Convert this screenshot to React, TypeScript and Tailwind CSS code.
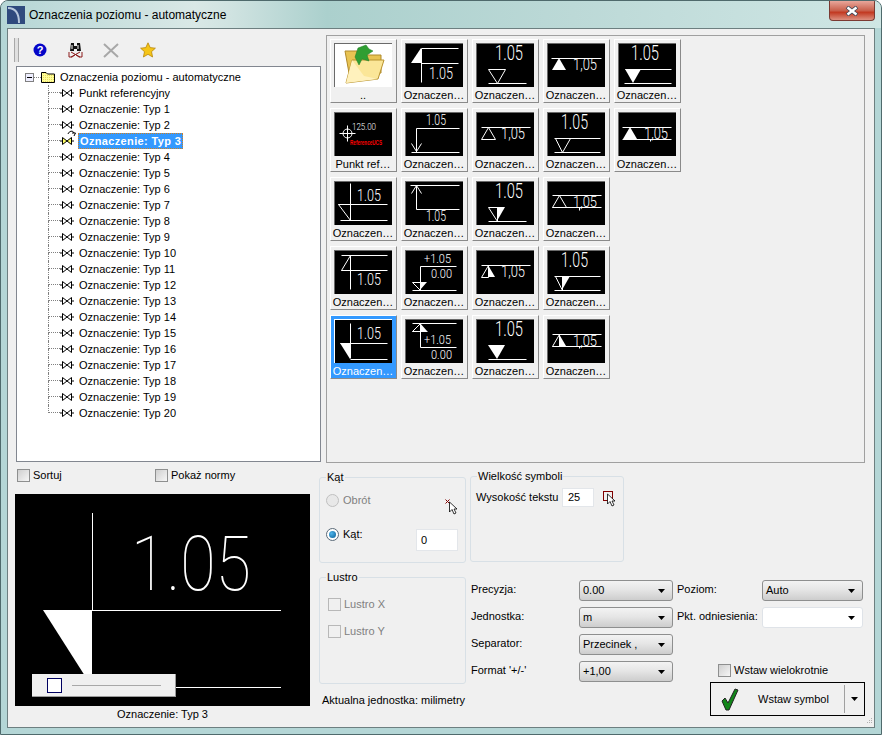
import type { ReactNode } from "react";

const font = "font-['Liberation_Sans',sans-serif]";

type Label = [string, number, number, number, number];
type Thumb = {
  lines?: string;
  fill?: string;
  outline?: string;
  labels?: Label[];
  red?: boolean;
  cross?: boolean;
};

const big1: Label = ["1.05", 19, 17, 20, 28];
const big2: Label = ["1.05", 14, 17, 20, 27];
const comma: Label = ["1,05", 26, 27, 17, 24];

const thumbs: { name: string; art: Thumb | null }[] = [
  { name: "..", art: null },
  { name: "Oznaczen…", art: { lines: "M16 5H53M16 20H53M16 5V39", fill: "6,20 16,5 16,20", labels: [["1.05", 24, 36, 17, 24]] } },
  { name: "Oznaczen…", art: { lines: "M12 40H50", outline: "12,26 29,26 21,40", labels: [big1] } },
  { name: "Oznaczen…", art: { lines: "M4 15H54", fill: "5,27 19,27 12,15", labels: [comma] } },
  { name: "Oznaczen…", art: { lines: "M7 26H53M6 40H53", fill: "7,26 23,26 15,40", labels: [["1.05", 13, 17, 20, 28]] } },
  { name: "Punkt ref…", art: { cross: true, labels: [["125.00", 18, 18, 9, 24]], red: true } },
  { name: "Oznaczen…", art: { lines: "M11 16H54M11 16V40M6 40H54M6 31L11 39L16 31", labels: [["1.05", 21, 13, 14, 20]] } },
  { name: "Oznaczen…", art: { lines: "M5 15H54", outline: "5,27 19,27 12,15", labels: [["1,05", 25, 27, 17, 24]] } },
  { name: "Oznaczen…", art: { lines: "M7 26H53M7 40H53", outline: "8,26 23,26 15,40", labels: [big2] } },
  { name: "Oznaczen…", art: { lines: "M4 15H53M4 27H53M32 27V29", fill: "5,27 19,27 12,15", labels: [comma] } },
  { name: "Oznaczen…", art: { lines: "M16 2V39M4 23H53M6 39H53", outline: "4,23 16,23 16,39", labels: [["1.05", 23, 20, 17, 24]] } },
  { name: "Oznaczen…", art: { lines: "M5 4H54M11 4V28M11 28H54M6 12L11 4L16 12", labels: [["1.05", 21, 40, 14, 20]] } },
  { name: "Oznaczen…", art: { lines: "M12 40H50", outline: "12,26 21,26 21,40", fill: "21,26 29,26 21,40", labels: [big1] } },
  { name: "Oznaczen…", art: { lines: "M5 14H54M5 26H54M32 26V29", outline: "5,26 12,14 19,26", labels: [["1,05", 26, 26, 15, 24]] } },
  { name: "Oznaczen…", art: { lines: "M7 5H53M7 20H53M16 5V39", outline: "7,20 16,5 16,20", labels: [["1.05", 23, 35, 17, 24]] } },
  { name: "Oznaczen…", art: { lines: "M15 16H51M15 16V40M7 40H51", outline: "7,32 15,32 15,40", fill: "15,32 22,32 15,40", labels: [["+1.05", 19, 13, 13, 27], ["0.00", 26, 28, 13, 21]] } },
  { name: "Oznaczen…", art: { lines: "M5 15H54", outline: "5,27 12,15 12,27", fill: "12,15 19,27 12,27", labels: [["1,05", 25, 27, 17, 24]] } },
  { name: "Oznaczen…", art: { lines: "M7 26H53M7 40H53", outline: "8,26 15,26 15,40", fill: "15,26 23,26 15,40", labels: [big2] } },
  { name: "Oznaczen…", art: { lines: "M16 4V39M6 24H53M16 40H53", fill: "6,24 16,24 16,40", labels: [["1.05", 23, 20, 17, 24]] } },
  { name: "Oznaczen…", art: { lines: "M7 4H51M15 4V28M15 28H51M7 12H22", outline: "7,12 15,4 15,12", fill: "15,4 22,12 15,12", labels: [["+1.05", 19, 25, 13, 27], ["0.00", 26, 40, 13, 21]] } },
  { name: "Oznaczen…", art: { lines: "M12 40H50", fill: "12,26 29,26 21,40", labels: [big1] } },
  { name: "Oznaczen…", art: { lines: "M5 15H54M5 27H54M32 27V29", outline: "5,27 12,15 12,27", fill: "12,15 19,27 12,27", labels: [["1,05", 26, 27, 15, 24]] } },
];

const treeRows = [
  "Punkt referencyjny",
  ...Array.from({ length: 20 }, (_, i) => `Oznaczenie: Typ ${i + 1}`),
];

function ThumbArt({ art }: { art: Thumb }) {
  return (
    <svg width="58" height="44" viewBox="0 0 58 44" className="-ml-px -mt-px block overflow-visible">
      {art.fill && <polygon points={art.fill} fill="#fff" />}
      <g transform="translate(0.5 0.5)" fill="none" stroke="#fff" strokeWidth="1">
        {art.outline && <polygon points={art.outline} />}
        {art.lines && <path d={art.lines} />}
        {art.cross && (
          <>
            <circle cx="13" cy="21" r="4.5" />
            <path d="M5 21H21M13 13V29" />
          </>
        )}
      </g>
      {art.labels?.map(([text, x, y, size, width]) => (
        <text
          key={text + x}
          x={x}
          y={y}
          fontSize={size}
          fill="#fff"
          textLength={width}
          lengthAdjust="spacingAndGlyphs"
          fontFamily="Roboto, sans-serif"
          fontWeight="300"
        >
          {text}
        </text>
      ))}
      {art.red && (
        <text x="16" y="33" fontSize="7" fill="#ff0000" fontWeight="700" fontFamily="Liberation Sans, sans-serif" textLength="32" lengthAdjust="spacingAndGlyphs">
          ReferenceUCS
        </text>
      )}
    </svg>
  );
}

function FolderUp() {
  return (
    <svg width="58" height="44" viewBox="0 0 58 44" className="-ml-px -mt-px block">
      <path d="M11 8H23L26 12H47V30H15Z" fill="#e8c352" stroke="#b08a2a" />
      <path d="M12 40L18 17H50L44 36Z" fill="#fbe698" stroke="#b8922e" />
      <path d="M18 17L12 40L44 36L30 33Z" fill="#fff1bd" />
      <path d="M24 5L32 2L35 6L39 8L33 12L35 18L28 16L25 22L21 14Z" fill="#2f9e32" stroke="#1d7a22" strokeWidth="0.5" />
    </svg>
  );
}

function Tile({ index }: { index: number }) {
  const item = thumbs[index];
  const selected = index === 18;
  const newRow = index === 14 || index === 18;
  return (
    <div
      className={`flex h-[64px] w-[67px] flex-col items-center border border-t-white border-l-white border-r-[#8a8a8a] border-b-[#8a8a8a] pl-[3px] pr-[4px] pt-[3px] ${
        selected ? "bg-[#3399ff] text-white" : "bg-[#f0f0f0] text-black"
      } ${newRow ? "col-start-1" : ""}`}
    >
      <div
        className={`h-[44px] w-[58px] shrink-0 border-t border-l ${
          item.art ? "bg-black" : "bg-white"
        } ${selected ? "border-white" : "border-[#6a6a6a]"}`}
      >
        {item.art ? <ThumbArt art={item.art} /> : <FolderUp />}
      </div>
      <span className="mt-px whitespace-nowrap text-[11px] leading-[14px]">{item.name}</span>
    </div>
  );
}

function Bowtie({ active }: { active?: boolean }) {
  const color = active ? "#ffff66" : "#fff";
  return (
    <svg width="14" height="8" viewBox="0 0 14 8" className="shrink-0">
      <path d="M0 4H2M12 4H14" stroke="#000" />
      <path d="M2.5 .5L7 4L2.5 7.5ZM11.5 .5L7 4L11.5 7.5Z" fill={color} stroke="#000" strokeWidth="1" />
    </svg>
  );
}

function TreeRow({ label, last, active }: { label: string; last: boolean; active: boolean }) {
  return (
    <div className="flex h-[16px] items-center">
      <span className="flex h-full w-[12px] shrink-0 flex-col">
        <span className="h-[8px] border-b border-l border-dotted border-[#808080]" />
        {!last && <span className="h-[8px] border-l border-dotted border-[#808080]" />}
      </span>
      <span className="relative flex shrink-0">
        <Bowtie active={active} />
        {active && (
          <svg width="9" height="7" viewBox="0 0 9 7" className="absolute -top-[7px] left-[7px]">
            <path d="M1 4C2 1 6 0 7 3M5 3H8.5L7 6" fill="none" stroke="#000" />
          </svg>
        )}
      </span>
      {active ? (
        <span className="ml-[4px] flex h-[16px] items-center border border-dotted border-[#d08020] bg-[#3399ff] pl-[1px] pr-[1px] text-[11px] font-bold tracking-[0.35px] text-white">
          {label}
        </span>
      ) : (
        <span className="ml-[5px] whitespace-nowrap text-[11px]">{label}</span>
      )}
    </div>
  );
}

function CheckBox({ label, disabled, className = "" }: { label: string; disabled?: boolean; className?: string }) {
  return (
    <div className={`flex h-[13px] items-center ${className}`}>
      <span
        className={`h-[13px] w-[13px] shrink-0 border ${
          disabled ? "border-[#b8b8b8] bg-[#f0f0f0]" : "border-[#8e8f8f] bg-[linear-gradient(135deg,#cfcfcf,#f6f6f6)]"
        }`}
      />
      <span className={`ml-[3px] whitespace-nowrap text-[11px] ${disabled ? "text-[#808080]" : "text-black"}`}>{label}</span>
    </div>
  );
}

function Radio({ label, on }: { label: string; on?: boolean }) {
  return (
    <div className="flex h-[13px] items-center">
      <span className={`flex h-[13px] w-[13px] items-center justify-center rounded-full border ${on ? "border-[#5a6a78] bg-white" : "border-[#c0c0c0] bg-[#e8e8e8]"}`}>
        {on && <span className="h-[7px] w-[7px] rounded-full bg-[radial-gradient(circle_at_35%_35%,#4fb4ea,#0b5f96)]" />}
      </span>
      <span className={`ml-[4px] text-[11px] ${on ? "text-black" : "text-[#808080]"}`}>{label}</span>
    </div>
  );
}

function Caret() {
  return (
    <svg width="7" height="4" viewBox="0 0 7 4" className="shrink-0">
      <path d="M0 0H7L3.5 4Z" fill="#000" />
    </svg>
  );
}

function Select({ value, width, blank }: { value: string; width: string; blank?: boolean }) {
  return (
    <div
      className={`flex h-[21px] items-center justify-between rounded-[3px] border pl-[3px] pr-[7px] text-[11px] ${width} ${
        blank ? "border-[#dfe3e8] bg-white" : "border-[#8e8f8f] bg-[linear-gradient(#f3f3f3,#e6e6e6_45%,#cdcdcd)]"
      }`}
    >
      <span className="whitespace-nowrap">{value}</span>
      <Caret />
    </div>
  );
}

function Group({ title, className, children }: { title: string; className: string; children: ReactNode }) {
  return (
    <fieldset className={`min-w-0 rounded-[3px] border border-[#d8e0e6] ${className}`}>
      <legend className="ml-[6px] px-[1px] text-[11px] leading-[12px]">{title}</legend>
      {children}
    </fieldset>
  );
}

function CursorIcon({ box }: { box?: boolean }) {
  return (
    <svg width="16" height="16" viewBox="0 0 16 16" className="shrink-0">
      {box ? (
        <rect x="0.5" y="0.5" width="9" height="9" fill="none" stroke="#800000" />
      ) : (
        <path d="M0.5 0.5L4.5 4.5M4.5 0.5L0.5 4.5" stroke="#800000" />
      )}
      <path d="M4.5 3V13L7 10.5L9 15L11 14L9 10H12Z" fill="#fff" stroke="#000" strokeWidth="0.8" />
    </svg>
  );
}

function Toolbar() {
  return (
    <div className="-ml-[2px] flex h-[26px] items-center">
      <span className="h-[24px] w-[5px] border-x border-[#a8a8a8] bg-[#e0e0e0]" />
      <svg width="14" height="14" viewBox="0 0 14 14" className="ml-[14px]">
        <circle cx="7" cy="7" r="6.5" fill="#0505c8" />
        <text x="7" y="11" fontSize="11" fontWeight="700" textAnchor="middle" fill="#fff" fontFamily="Liberation Sans, sans-serif">?</text>
      </svg>
      <svg width="16" height="15" viewBox="0 0 16 15" className="ml-[21px]">
        <path d="M3 0H6V8H2ZM9 0H12L13 8H9Z" fill="#111" />
        <rect x="6" y="3" width="3" height="3" fill="#111" />
        <path d="M4 2V6M10 2V6" stroke="#fff" />
        <path d="M1 9V14H4L7.5 11.5L11 14H14V9M3 9L12 14M12 9L3 14" fill="none" stroke="#8b1a1a" />
      </svg>
      <svg width="16" height="15" viewBox="0 0 16 15" className="ml-[19px]">
        <path d="M1 1L15 14M15 1L1 14" stroke="#a8a8a8" strokeWidth="2" />
      </svg>
      <svg width="16" height="16" viewBox="0 0 16 16" className="ml-[21px]">
        <path d="M8 .8L10.2 5.6L15.4 6.2L11.5 9.7L12.6 15L8 12.3L3.4 15L4.5 9.7L.6 6.2L5.8 5.6Z" fill="#f5c518" stroke="#b8860b" strokeWidth="0.8" />
      </svg>
    </div>
  );
}

function Tree() {
  return (
    <div className="h-[396px] w-[305px] border border-[#828790] bg-white pl-[8px] pt-[2px]">
      <div className="flex h-[16px] items-center">
        <svg width="9" height="9" viewBox="0 0 9 9" className="shrink-0">
          <rect x=".5" y=".5" width="8" height="8" fill="#eef" stroke="#808080" />
          <path d="M2 4.5H7" stroke="#000" />
        </svg>
        <span className="w-[7px] border-t border-dotted border-[#808080]" />
        <svg width="14" height="12" viewBox="0 0 14 12" className="shrink-0">
          <defs>
            <pattern id="checker" width="2" height="2" patternUnits="userSpaceOnUse">
              <rect width="2" height="2" fill="#ffff99" />
              <rect width="1" height="1" fill="#e8d860" />
            </pattern>
          </defs>
          <path d="M.5 11.5V1.5H5L6.5 3H13.5V11.5Z" fill="url(#checker)" stroke="#000" />
        </svg>
        <span className="ml-[5px] whitespace-nowrap text-[11px]">Oznaczenia poziomu - automatyczne</span>
      </div>
      <div className="ml-[23px]">
        {treeRows.map((row, i) => (
          <TreeRow key={row} label={row} last={i === treeRows.length - 1} active={row === "Oznaczenie: Typ 3"} />
        ))}
      </div>
    </div>
  );
}

function Preview() {
  return (
    <div className="relative h-[212px] w-[295px] bg-black">
      <svg width="295" height="212" viewBox="0 0 295 212" className="block">
        <polygon points="28,116 77,116 77,193" fill="#fff" />
        <path d="M77.5 19V116M77 116.5H266M77 193.5H266" stroke="#fff" />
        <text x="116" y="96" fontSize="76" fill="#fff" fontFamily="Roboto, sans-serif" fontWeight="100" textLength="120" lengthAdjust="spacingAndGlyphs">
          1.05
        </text>
      </svg>
      <div className="absolute left-[17px] top-[180px] flex h-[23px] w-[144px] items-center border-b border-r border-[#9a9a9a] bg-[#f0f0f0] pl-[15px]">
        <span className="h-[15px] w-[15px] border border-[#000060] bg-white" />
        <span className="ml-[10px] h-px w-[89px] bg-[#a8a8a8]" />
      </div>
    </div>
  );
}

export default function App() {
  return (
    <div className={`${font} h-[735px] w-[882px] overflow-hidden rounded-t-[8px] border border-[#4f6a6c] bg-[#b4d6d6] text-black`}>
      <div className="flex h-[27px] items-start bg-[linear-gradient(90deg,#b5d6d5_0%,#d9e8e6_22%,#d0e3e1_26%,#abd0cd_37%,#bcd9d7_65%,#cfe6e4_100%)] pl-[6px] pt-[5px]">
        <svg width="18" height="18" viewBox="0 0 18 18" className="shrink-0">
          <rect width="18" height="18" fill="#2f4a7d" />
          <path d="M1 2C8 2 12 7 12 17" fill="none" stroke="#b8c8dc" strokeWidth="2" />
        </svg>
        <span className="ml-[4px] mt-[1px] whitespace-nowrap text-[12px] leading-[16px]">Oznaczenia poziomu - automatyczne</span>
        <div className="-mt-[5px] ml-auto mr-[6px] flex h-[20px] w-[46px] items-center justify-center rounded-b-[4px] border border-t-0 border-[#7a3a32] bg-[linear-gradient(#e8a79b,#c9604c_50%,#c23a22_60%,#dd9080)]">
          <svg width="14" height="10" viewBox="0 0 14 10">
            <path d="M2 1L12 9M12 1L2 9" stroke="#3f4a5a" strokeWidth="4" />
            <path d="M2.5 1.5L11.5 8.5M11.5 1.5L2.5 8.5" stroke="#fff" strokeWidth="2.4" />
          </svg>
        </div>
      </div>

      <div className="relative ml-[6px] h-[700px] w-[868px] border border-[#6d7f80] bg-[#f0f0f0]">
        <div className="mt-[6px] flex">
          <div className="flex w-[318px] flex-col pl-[8px] pt-[2px]">
            <Toolbar />
            <div className="mt-[3px]">
              <Tree />
            </div>
          </div>
          <div className="h-[428px] w-[539px] border border-[#a0a0a0] pl-[3px] pt-[3px]">
            <div className="grid grid-cols-[repeat(5,67px)] gap-x-[4px] gap-y-[5px]">
              {thumbs.map((_, i) => (
                <Tile key={i} index={i} />
              ))}
            </div>
          </div>
        </div>

        <div className="flex">
          <div className="w-[311px] pl-[7px]">
            <div className="mt-[5px] flex h-[14px] items-center pl-[2px]">
              <CheckBox label="Sortuj" className="w-[138px]" />
              <CheckBox label="Pokaż normy" />
            </div>
            <div className="mt-[12px]">
              <Preview />
            </div>
            <div className="mt-[1px] w-[295px] text-center text-[11px] leading-[14px]">Oznaczenie: Typ 3</div>
          </div>

          <div className="mt-[8px] w-[151px]">
            <Group title="Kąt" className="h-[92px] w-[147px]">
              <div className="pl-[6px] pr-[7px] pt-[11px]">
                <div className="flex h-[13px] items-start">
                  <Radio label="Obrót" />
                  <span className="ml-auto -mr-[3px] mt-[5px]">
                    <CursorIcon />
                  </span>
                </div>
                <div className="mt-[21px] flex items-start">
                  <Radio label="Kąt:" on />
                  <span className="ml-auto mt-px flex h-[22px] w-[42px] items-center border border-[#e3e6ea] bg-white pl-[4px] text-[11px]">0</span>
                </div>
              </div>
            </Group>
            <Group title="Lustro" className="mt-[8px] h-[113px] w-[147px]">
              <div className="pl-[8px] pt-[15px]">
                <CheckBox label="Lustro X" disabled />
                <CheckBox label="Lustro Y" disabled className="mt-[14px]" />
              </div>
            </Group>
            <div className="ml-[3px] mt-[9px] whitespace-nowrap text-[11px] leading-[14px]">Aktualna jednostka: milimetry</div>
          </div>

          <div className="mt-[7px] w-[396px]">
            <Group title="Wielkość symboli" className="h-[92px] w-[154px]">
              <div className="flex items-center pl-[5px] pt-[6px]">
                <span className="w-[86px] whitespace-nowrap text-[11px]">Wysokość tekstu</span>
                <span className="flex h-[19px] w-[32px] items-center border border-[#e3e6ea] bg-white pl-[5px] text-[11px]">25</span>
                <span className="ml-[9px] mt-[2px]">
                  <CursorIcon box />
                </span>
              </div>
            </Group>
            <div className="mt-[18px] flex items-start">
              <div className="grid grid-cols-[108px_94px] content-start gap-y-[6px] pl-[1px]">
                {[
                  ["Precyzja:", "0.00"],
                  ["Jednostka:", "m"],
                  ["Separator:", "Przecinek ,"],
                  ["Format '+/-'", "+1,00"],
                ].map(([label, value]) => (
                  <div key={label} className="contents">
                    <span className="text-[11px] leading-[19px]">{label}</span>
                    <Select value={value} width="w-[94px]" />
                  </div>
                ))}
              </div>
              <div className="ml-[4px] w-[188px]">
                <div className="flex items-start">
                  <span className="w-[85px] text-[11px] leading-[19px]">Poziom:</span>
                  <Select value="Auto" width="w-[101px]" />
                </div>
                <div className="mt-[6px] flex items-start">
                  <span className="w-[85px] whitespace-nowrap text-[11px] leading-[19px]">Pkt. odniesienia:</span>
                  <Select value="" blank width="w-[101px]" />
                </div>
                <CheckBox label="Wstaw wielokrotnie" className="ml-[41px] mt-[36px]" />
                <div className="ml-[33px] mt-[5px] flex h-[34px] w-[155px] items-center border border-black bg-[#f0f0f0]">
                  <svg width="18" height="24" viewBox="0 0 18 24" className="ml-[10px] shrink-0">
                    <path d="M1 14L4 11L7 16L14 2L17 3L8 23H5Z" fill="#12861a" stroke="#222" strokeWidth="1" />
                  </svg>
                  <span className="ml-[19px] whitespace-nowrap text-[11px]">Wstaw symbol</span>
                  <span className="ml-auto h-[28px] w-px bg-[#a0a0a0]" />
                  <span className="mx-[6px]">
                    <Caret />
                  </span>
                </div>
              </div>
            </div>
          </div>
        </div>

        <svg width="7" height="7" viewBox="0 0 7 7" className="absolute bottom-[3px] right-[1px]">
          <path d="M5 1H6V2H5ZM3 3H4V4H3ZM5 3H6V4H5ZM1 5H2V6H1ZM3 5H4V6H3ZM5 5H6V6H5Z" fill="#b0b0b0" />
        </svg>
      </div>
    </div>
  );
}
